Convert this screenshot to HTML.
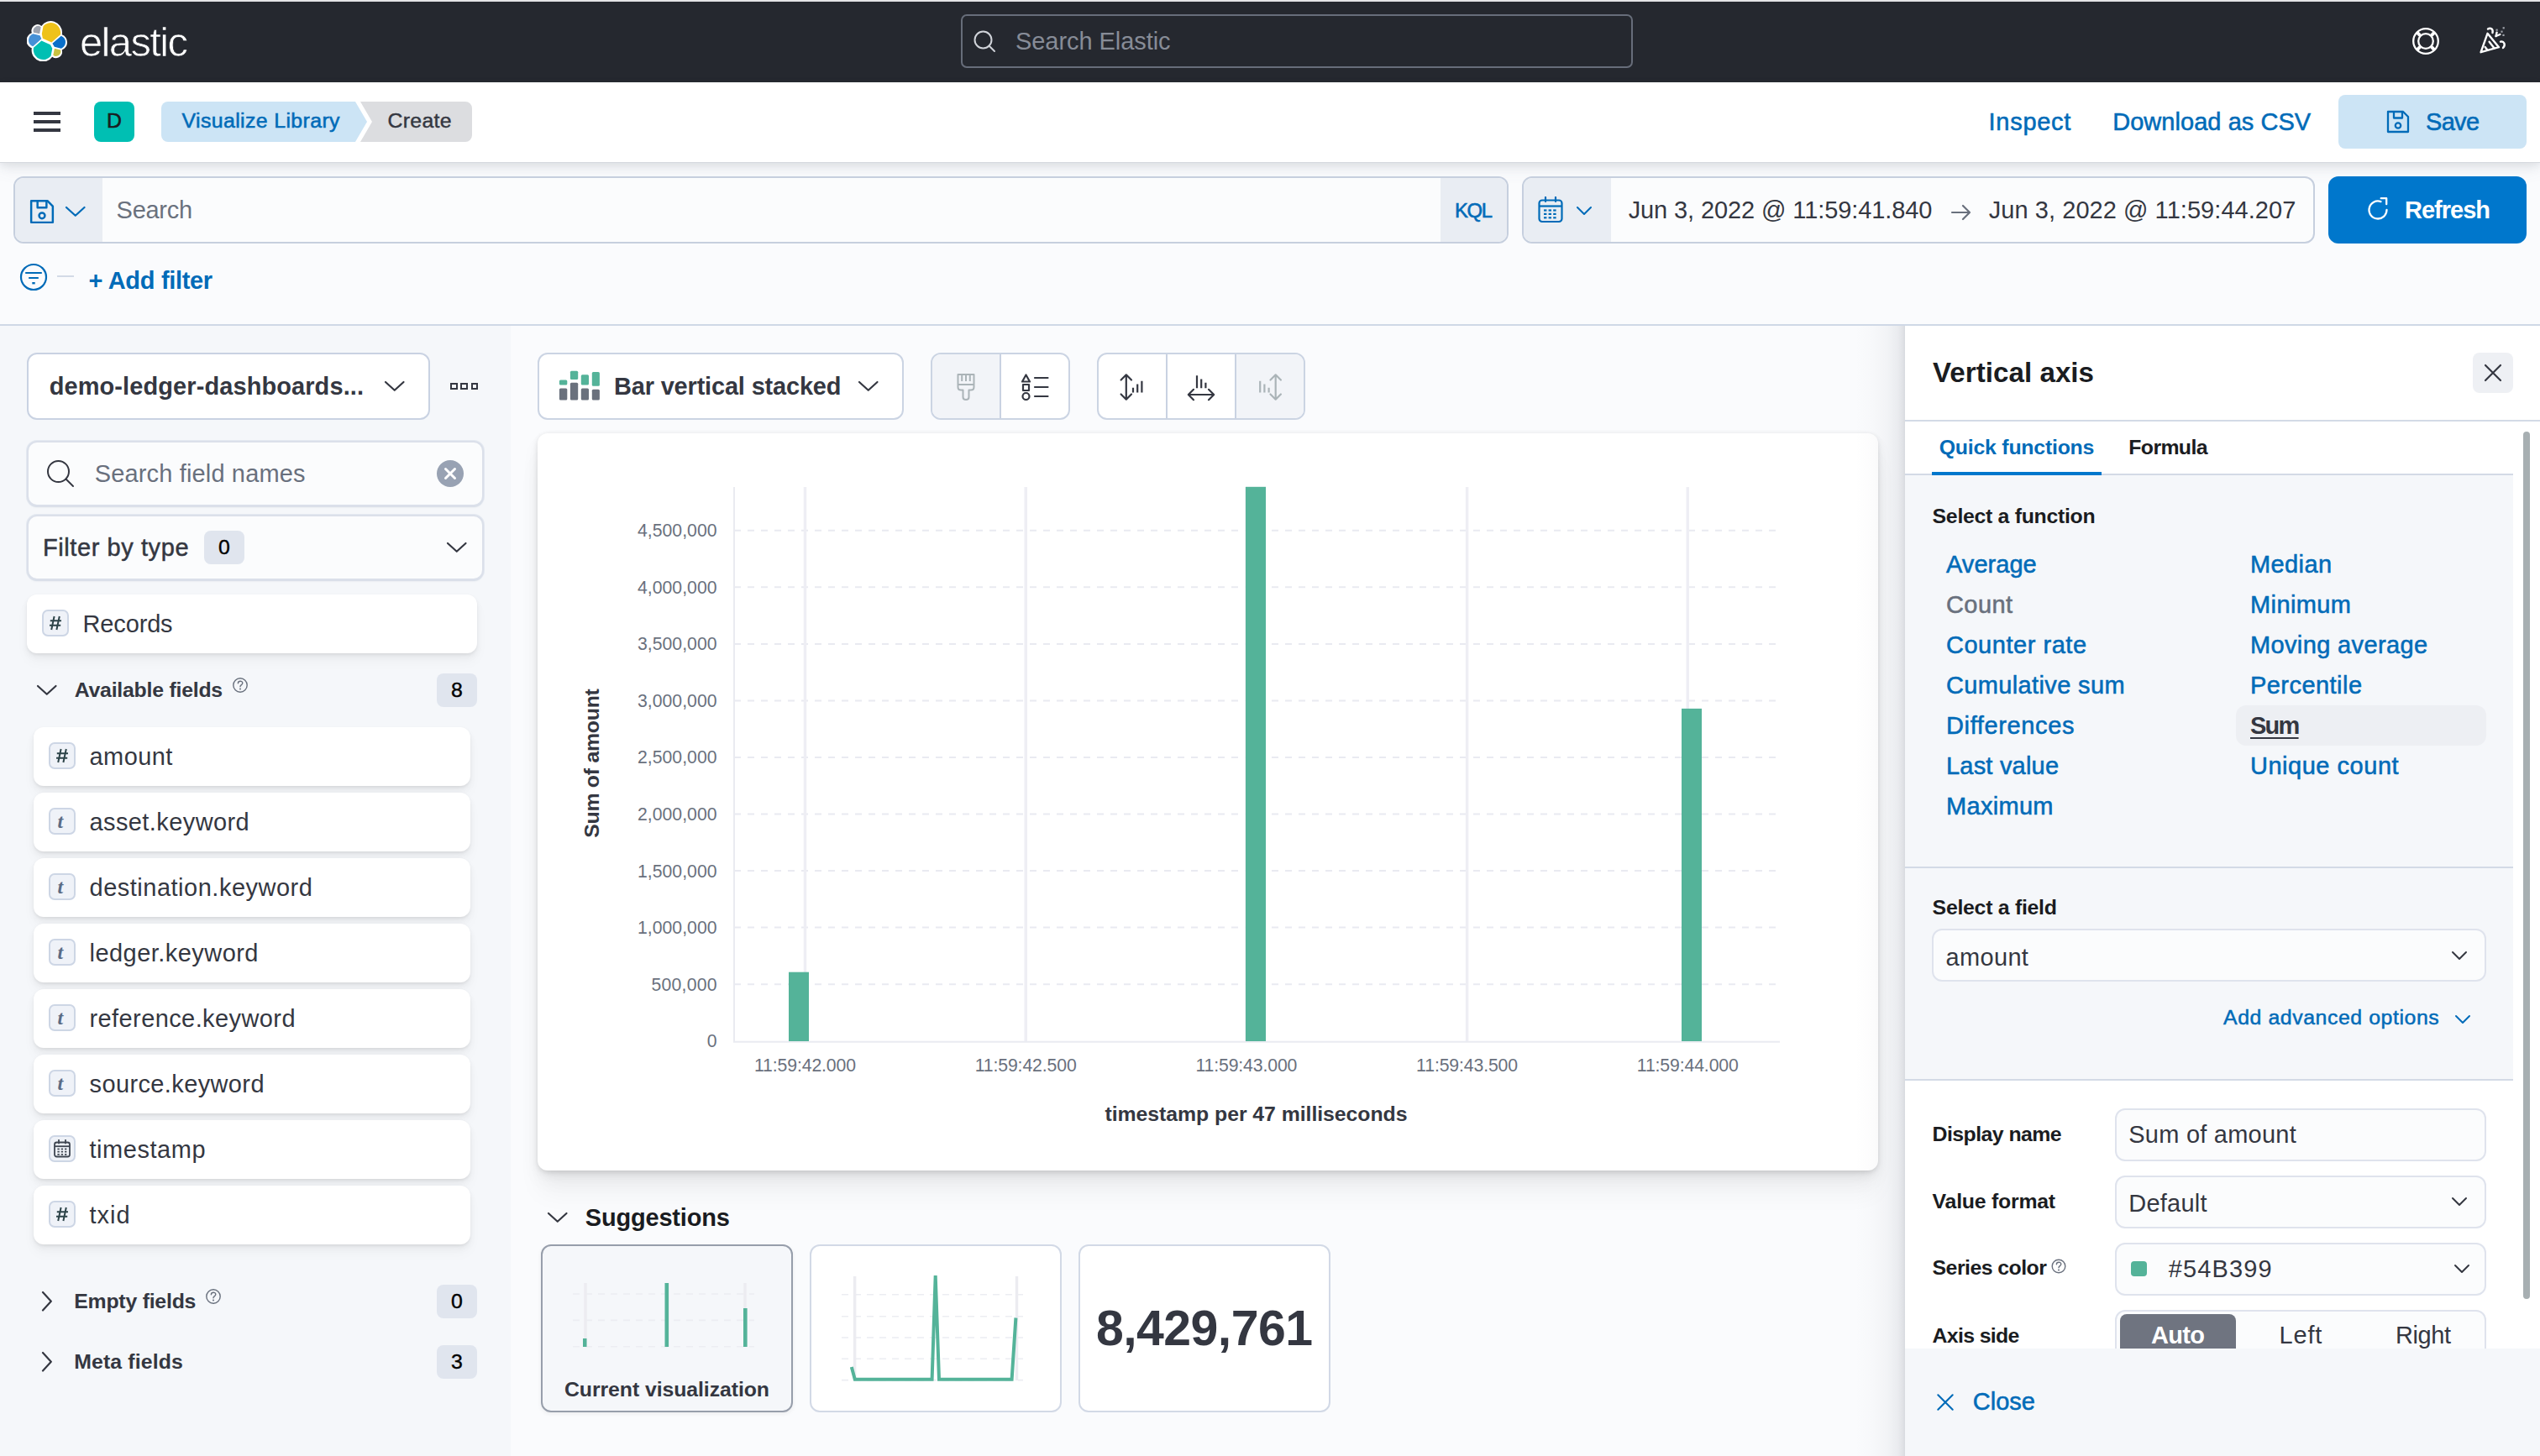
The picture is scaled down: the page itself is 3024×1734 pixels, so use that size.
<!DOCTYPE html>
<html lang="en"><head><meta charset="utf-8"><title>Lens - Elastic</title>
<style>
html,body{margin:0;padding:0;}
body{width:3024px;height:1734px;overflow:hidden;position:relative;background:#fafbfd;font-family:"Liberation Sans",sans-serif;}
.b{position:absolute;display:block;}
.t{position:absolute;white-space:nowrap;font-family:"Liberation Sans",sans-serif;}
</style></head>
<body>
<div class="b" style="left:0px;top:0px;width:3024px;height:2px;background:#e4e4e6;"></div>
<div class="b" style="left:0px;top:2px;width:3024px;height:96px;background:#25282f;"></div>
<div class="b" style="left:0px;top:193px;width:3024px;height:193px;background:#fafbfd;"></div>
<div class="b" style="left:0px;top:386px;width:3024px;height:2px;background:#cfd8e6;"></div>
<div class="b" style="left:0px;top:388px;width:608px;height:1346px;background:#f5f7fa;"></div>
<div class="b" style="left:608px;top:388px;width:1660px;height:1346px;background:#fafbfd;"></div>
<div class="b" style="left:0px;top:98px;width:3024px;height:95px;background:#fff;box-shadow:0 1px 0 #d6d9de, 0 4px 10px rgba(105,112,125,.16), 0 10px 18px rgba(105,112,125,.07);"></div>
<svg class="b" style="left:32px;top:25px;" width="48" height="48" viewBox="0 0 32 32"><g fill="none" fill-rule="evenodd">
<path fill="#FFF" d="M32 16.77a6.334 6.334 0 00-1.14-3.63 6.269 6.269 0 00-3.02-2.3 9.048 9.048 0 00.16-1.7 9.15 9.15 0 00-1.73-5.37A9.037 9.037 0 0021.7.44a8.963 8.963 0 00-5.62.12 9.01 9.01 0 00-4.5 3.38 4.9 4.9 0 00-6.03-.03 4.963 4.963 0 00-1.74 2.54c-.3 1.01-.27 2.1.09 3.09a6.347 6.347 0 00-3.03 2.31 6.406 6.406 0 00-.03 7.3c.75 1.08 1.82 1.9 3.05 2.35a9.18 9.18 0 00-.16 1.7c0 1.93.61 3.8 1.73 5.36a9.04 9.04 0 004.56 3.31c1.83.59 3.79.57 5.61-.03a9.037 9.037 0 004.51-3.36 4.867 4.867 0 003 1.04c1.04 0 2.05-.34 2.89-.95a4.94 4.94 0 001.77-2.48c.33-.99.33-2.06-.01-3.05a6.364 6.364 0 003.04-2.31A6.39 6.39 0 0032 16.77"/>
<path fill="#EEC21A" d="M12.58 13.79l7 3.2 7.07-6.2a7.849 7.849 0 00.15-1.57 7.87 7.87 0 00-1.39-4.47A7.834 7.834 0 0021.72 1.9a7.822 7.822 0 00-4.68-.27 7.862 7.862 0 00-4 2.45l-1.17 6.1.71 3.61z"/>
<path fill="#00BFB3" d="M5.33 21.22a7.94 7.94 0 001.23 6.06 7.86 7.86 0 003.71 2.87c1.51.58 3.17.67 4.74.27a7.85 7.85 0 004.02-2.51l1.17-6.07-1.56-2.98-7.03-3.21-6.28 5.57z"/>
<path fill="#9CA2AD" d="M5.29 9.09l4.8 1.13L11.14 4.77a3.785 3.785 0 00-4.53-.02A3.823 3.823 0 005.29 9.09"/>
<path fill="#4590D6" d="M4.87 10.23a5.354 5.354 0 00-2.54 1.93 5.32 5.32 0 00-.98 3.04c0 1.1.33 2.17.95 3.07a5.374 5.374 0 002.55 1.97l6.73-6.08-1.24-2.64-5.47-1.29z"/>
<path fill="#C9C341" d="M20.87 27.23a3.744 3.744 0 002.29.8 3.792 3.792 0 003.13-1.66 3.823 3.823 0 00.45-3.42l-4.8-1.12-1.07 5.4z"/>
<path fill="#0A6FC9" d="M21.85 20.55l5.28 1.23c1.03-.38 1.92-1.06 2.55-1.95a5.31 5.31 0 00.98-3.05 5.35 5.35 0 00-.94-3.04 5.373 5.373 0 00-2.52-1.96l-6.91 6.05 1.56 2.72z"/>
</g></svg>
<span id="logo" class="t" style="top:26.0px;font-size:49px;line-height:49px;font-weight:400;color:#fff;letter-spacing:-1.648px;left:95px;-webkit-text-stroke:0.7px #25282f;">elastic</span>
<div class="b" style="left:1144px;top:17px;width:800px;height:64px;border:2px solid #676d7a;border-radius:7px;box-sizing:border-box;"></div>
<svg class="b" style="left:1158px;top:35px;" width="28" height="28" viewBox="0 0 28 28"><circle cx="12.5" cy="12.5" r="10" fill="none" stroke="#d0d3d9" stroke-width="2"/><path d="M19.5 19.5 L26 26" stroke="#d0d3d9" stroke-width="2" stroke-linecap="round"/></svg>
<span id="t2" class="t" style="top:34.5px;font-size:28.98px;line-height:28.98px;font-weight:400;color:#878c97;letter-spacing:-0.044px;left:1209px;">Search Elastic</span>
<svg class="b" style="left:2870px;top:31px;" width="36" height="36" viewBox="-18 -18 36 36"><circle r="14.8" fill="none" stroke="#fff" stroke-width="2.3"/><circle r="8.8" fill="none" stroke="#fff" stroke-width="2.3"/><g stroke="#fff" stroke-width="4"><path d="M6.6 -6.6 L10.3 -10.3"/><path d="M-6.6 -6.6 L-10.3 -10.3"/><path d="M6.6 6.6 L10.3 10.3"/><path d="M-6.6 6.6 L-10.3 10.3"/></g></svg>
<svg class="b" style="left:2950px;top:31px;" width="36" height="36" viewBox="0 0 36 36"><g fill="none" stroke="#fff" stroke-width="2.4" stroke-linecap="round" stroke-linejoin="round"><path d="M11.5 8.8 L25 25.2 L3.6 31.2 Z"/><path d="M13.6 18.8 L19.6 26.4"/><path d="M8.6 25 L11.4 28.6"/><path d="M12 3.5 C15 1.5 18.5 3.5 17.5 8"/><path d="M21.6 12 L26.4 10"/><path d="M21.6 12 L22.6 7.6"/><path d="M27 18.6 C31 17.6 33.6 22 30 26"/></g><g fill="#9ea2aa"><rect x="21.5" y="3.6" width="2.2" height="2.2"/><rect x="27.4" y="5.6" width="2.2" height="2.2"/><rect x="29.6" y="1.2" width="2.2" height="2.2"/><rect x="29.4" y="9.8" width="2.2" height="2.2"/></g></svg>
<div class="b" style="left:40px;top:133px;width:32px;height:4px;background:#343741;"></div>
<div class="b" style="left:40px;top:143px;width:32px;height:4px;background:#343741;"></div>
<div class="b" style="left:40px;top:153px;width:32px;height:4px;background:#343741;"></div>
<div class="b" style="left:112px;top:121px;width:48px;height:48px;background:#00bfb3;border-radius:8px;"></div>
<span id="t3" class="t" style="top:132.0px;font-size:24.84px;line-height:24.84px;font-weight:400;color:#1a1c21;-webkit-text-stroke:0.6px #1a1c21;left:136px;transform:translateX(-50%);margin-left:0.00px;">D</span>
<svg class="b" style="left:192px;top:121px;" width="372" height="48" viewBox="0 0 372 48"><path d="M8 0 H231 L245 24 L231 48 H8 A8 8 0 0 1 0 40 V8 A8 8 0 0 1 8 0 Z" fill="#cce4f5"/><path d="M237 0 H362 A8 8 0 0 1 370 8 V40 A8 8 0 0 1 362 48 H237 L251 24 Z" fill="#dcdde0"/></svg>
<span id="t4" class="t" style="top:132.0px;font-size:24.84px;line-height:24.84px;font-weight:400;color:#006bb8;letter-spacing:0.394px;-webkit-text-stroke:0.55px #006bb8;left:216.5px;">Visualize Library</span>
<span id="t5" class="t" style="top:132.2px;font-size:24.84px;line-height:24.84px;font-weight:400;color:#343741;letter-spacing:0.294px;-webkit-text-stroke:0.45px #343741;left:461.5px;">Create</span>
<span id="t6" class="t" style="top:130.5px;font-size:28.98px;line-height:28.98px;font-weight:400;color:#006bb8;letter-spacing:0.732px;-webkit-text-stroke:0.55px #006bb8;left:2367.6px;">Inspect</span>
<span id="t7" class="t" style="top:130.5px;font-size:28.98px;line-height:28.98px;font-weight:400;color:#006bb8;letter-spacing:0.065px;-webkit-text-stroke:0.55px #006bb8;left:2515.2px;">Download as CSV</span>
<div class="b" style="left:2784px;top:113px;width:224px;height:64px;background:#cce4f5;border-radius:8px;"></div>
<svg class="b" style="left:2841px;top:131px;" width="28" height="28" viewBox="0 0 28 28"><path d="M2 2 H20 L26 8 V26 H2 Z" fill="none" stroke="#006bb8" stroke-width="2.3" stroke-linejoin="round"/><path d="M9 2 V9.5 H19 V2" fill="none" stroke="#006bb8" stroke-width="2.3" stroke-linejoin="round"/><circle cx="14" cy="18.5" r="3.2" fill="none" stroke="#006bb8" stroke-width="2.3"/></svg>
<span id="t8" class="t" style="top:130.5px;font-size:28.98px;line-height:28.98px;font-weight:400;color:#006bb8;letter-spacing:-0.677px;-webkit-text-stroke:0.55px #006bb8;left:2888px;">Save</span>
<div class="b" style="left:16px;top:210px;width:1780px;height:80px;background:#fbfcfd;border:2px solid #c6cfde;border-radius:12px;overflow:hidden;box-sizing:border-box;"><div class="b" style="left:0;top:0;width:104px;height:76px;background:#e9edf3;"></div><div class="b" style="right:0;top:0;width:79px;height:76px;background:#e9edf3;"></div></div>
<svg class="b" style="left:35px;top:237px;" width="30" height="30" viewBox="0 0 28 28"><path d="M2 2 H20 L26 8 V26 H2 Z" fill="none" stroke="#006bb8" stroke-width="2.3" stroke-linejoin="round"/><path d="M9 2 V9.5 H19 V2" fill="none" stroke="#006bb8" stroke-width="2.3" stroke-linejoin="round"/><circle cx="14" cy="18.5" r="3.2" fill="none" stroke="#006bb8" stroke-width="2.3"/></svg>
<svg class="b" style="left:77.25px;top:245.1px;" width="25.5" height="13.8" viewBox="-2 -2 25.5 13.8"><path d="M0 0 L10.75 9.8 L21.5 0" fill="none" stroke="#006bb8" stroke-width="2.2" stroke-linecap="round" stroke-linejoin="round"/></svg>
<span id="t9" class="t" style="top:235.5px;font-size:28.98px;line-height:28.98px;font-weight:400;color:#6a717d;letter-spacing:-0.259px;left:138.6px;">Search</span>
<span id="t10" class="t" style="top:238.9px;font-size:23.8px;line-height:23.8px;font-weight:400;color:#006bb8;letter-spacing:-1.312px;-webkit-text-stroke:0.6px #006bb8;left:1732px;">KQL</span>
<div class="b" style="left:1812px;top:210px;width:944px;height:80px;background:#fbfcfd;border:2px solid #c6cfde;border-radius:12px;overflow:hidden;box-sizing:border-box;"><div class="b" style="left:0;top:0;width:104px;height:76px;background:#e9edf3;"></div></div>
<svg class="b" style="left:1831px;top:234px;" width="30" height="32" viewBox="0 0 30 32"><g fill="none" stroke="#006bb8" stroke-width="2.2" stroke-linejoin="round"><rect x="1.5" y="4.5" width="27" height="25.5" rx="3.5"/><path d="M1.5 11.5 H28.5"/><path d="M9 1 V6" stroke-linecap="round"/><path d="M21 1 V6" stroke-linecap="round"/></g><g fill="#006bb8"><rect x="7.0" y="15.4" width="3.4" height="2.2"/><rect x="12.6" y="15.4" width="3.4" height="2.2"/><rect x="18.2" y="15.4" width="3.4" height="2.2"/><rect x="7.0" y="19.8" width="3.4" height="2.2"/><rect x="12.6" y="19.8" width="3.4" height="2.2"/><rect x="18.2" y="19.8" width="3.4" height="2.2"/><rect x="7.0" y="24.2" width="3.4" height="2.2"/><rect x="12.6" y="24.2" width="3.4" height="2.2"/><rect x="18.2" y="24.2" width="3.4" height="2.2"/></g></svg>
<svg class="b" style="left:1876.0px;top:244.5px;" width="20" height="12" viewBox="-2 -2 20 12"><path d="M0 0 L8.0 8 L16 0" fill="none" stroke="#006bb8" stroke-width="2.0" stroke-linecap="round" stroke-linejoin="round"/></svg>
<span id="t11" class="t" style="top:235.5px;font-size:28.98px;line-height:28.98px;font-weight:400;color:#343741;letter-spacing:-0.088px;left:1938.7px;">Jun 3, 2022 @ 11:59:41.840</span>
<svg class="b" style="left:2322px;top:240.5px;" width="26" height="24" viewBox="0 0 26 24"><path d="M2 12 H23 M15 4 L23 12 L15 20" fill="none" stroke="#69707d" stroke-width="2.2" stroke-linecap="round" stroke-linejoin="round"/></svg>
<span id="t12" class="t" style="top:235.5px;font-size:28.98px;line-height:28.98px;font-weight:400;color:#343741;letter-spacing:0.064px;left:2367.8px;">Jun 3, 2022 @ 11:59:44.207</span>
<div class="b" style="left:2772px;top:210px;width:236px;height:80px;background:#0077cc;border-radius:12px;"></div>
<svg class="b" style="left:2816px;top:235px;" width="30" height="30" viewBox="0 0 30 30"><path d="M25.5 15 A10.5 10.5 0 1 1 18.5 5.1" fill="none" stroke="#fff" stroke-width="2.3" stroke-linecap="round"/><path d="M17.5 1.5 H24 V8.5" fill="none" stroke="#fff" stroke-width="2.3" stroke-linecap="round" stroke-linejoin="round" transform="translate(1.2 -0.3)"/></svg>
<span id="t13" class="t" style="top:235.5px;font-size:28.98px;line-height:28.98px;font-weight:700;color:#fff;letter-spacing:-0.979px;left:2863px;">Refresh</span>
<svg class="b" style="left:22px;top:312px;" width="36" height="36" viewBox="0 0 36 36"><circle cx="18" cy="18" r="15" fill="none" stroke="#006bb8" stroke-width="2.2"/><path d="M9 13 H27 M13 19 H23" stroke="#006bb8" stroke-width="2.2" stroke-linecap="round"/><rect x="16.3" y="24" width="3.4" height="2.4" fill="#006bb8"/></svg>
<div class="b" style="left:68px;top:328px;width:20px;height:2px;background:#d3dae6;"></div>
<span id="t14" class="t" style="top:319.5px;font-size:28.98px;line-height:28.98px;font-weight:700;color:#006bb8;letter-spacing:-0.312px;left:105.5px;">+ Add filter</span>
<div class="b" style="left:32px;top:420px;width:480px;height:80px;background:#fff;border:2px solid #c9d2e2;border-radius:12px;box-sizing:border-box;"></div>
<span id="t15" class="t" style="top:446.0px;font-size:28.98px;line-height:28.98px;font-weight:700;color:#343741;letter-spacing:0.103px;left:58.7px;">demo-ledger-dashboards...</span>
<svg class="b" style="left:457.25px;top:453.1px;" width="25.5" height="13.8" viewBox="-2 -2 25.5 13.8"><path d="M0 0 L10.75 9.8 L21.5 0" fill="none" stroke="#343741" stroke-width="2.2" stroke-linecap="round" stroke-linejoin="round"/></svg>
<div class="b" style="left:536.0px;top:455.5px;width:8.5px;height:8.5px;border:2px solid #343741;box-sizing:border-box;"></div>
<div class="b" style="left:548.4px;top:455.5px;width:8.5px;height:8.5px;border:2px solid #343741;box-sizing:border-box;"></div>
<div class="b" style="left:560.8px;top:455.5px;width:8.5px;height:8.5px;border:2px solid #343741;box-sizing:border-box;"></div>
<div class="b" style="left:32px;top:525px;width:544px;height:78px;background:#fbfcfd;border:2px solid #dbe0ea;border-radius:12px;box-sizing:border-box;box-shadow:0 0 0 1px rgba(203,212,227,.4),0 2px 2px -1px rgba(152,162,179,.25);"></div>
<svg class="b" style="left:55px;top:547px;" width="34" height="34" viewBox="0 0 34 34"><circle cx="14.5" cy="14.5" r="12.5" fill="none" stroke="#343741" stroke-width="2"/><path d="M23.5 23.5 L32 32" stroke="#343741" stroke-width="2" stroke-linecap="round"/></svg>
<span id="t16" class="t" style="top:549.5px;font-size:28.98px;line-height:28.98px;font-weight:400;color:#69707d;letter-spacing:0.166px;left:112.7px;">Search field names</span>
<svg class="b" style="left:520px;top:548px;" width="32" height="32" viewBox="0 0 32 32"><circle cx="16" cy="16" r="16" fill="#98a2b3"/><path d="M10.5 10.5 L21.5 21.5 M21.5 10.5 L10.5 21.5" stroke="#fff" stroke-width="3" stroke-linecap="round"/></svg>
<div class="b" style="left:32px;top:613px;width:544px;height:78px;background:#fbfcfd;border:2px solid #dbe0ea;border-radius:12px;box-sizing:border-box;box-shadow:0 0 0 1px rgba(203,212,227,.4),0 2px 2px -1px rgba(152,162,179,.25);"></div>
<span id="t17" class="t" style="top:637.5px;font-size:28.98px;line-height:28.98px;font-weight:400;color:#343741;letter-spacing:0.590px;-webkit-text-stroke:0.5px #343741;left:51px;">Filter by type</span>
<div class="b" style="left:243px;top:632px;width:48px;height:40px;background:#e0e5ee;border-radius:8px;"></div>
<span id="t18" class="t" style="top:639.5px;font-size:24.84px;line-height:24.84px;font-weight:400;color:#000;-webkit-text-stroke:0.4px #000;left:267px;transform:translateX(-50%);margin-left:0.00px;">0</span>
<svg class="b" style="left:531.25px;top:645.1px;" width="25.5" height="13.8" viewBox="-2 -2 25.5 13.8"><path d="M0 0 L10.75 9.8 L21.5 0" fill="none" stroke="#343741" stroke-width="2.2" stroke-linecap="round" stroke-linejoin="round"/></svg>
<div class="b" style="left:32px;top:708px;width:536px;height:70px;background:#fff;border-radius:12px;box-shadow:0 1.6px 3px rgba(0,0,0,.05),0 4px 8px rgba(0,0,0,.05),0 10px 16px rgba(0,0,0,.03);"></div>
<div class="b" style="left:50px;top:726px;width:32px;height:32px;background:#eff2f8;border:2px solid #cdd6e5;border-radius:7px;box-sizing:border-box;"></div>
<svg class="b" style="left:58px;top:733px;" width="16" height="18" viewBox="0 0 16 18"><path d="M6.6 1 L3.2 17 M12.8 1 L9.4 17 M1.8 6.2 H15 M1 11.8 H14.2" fill="none" stroke="#2d4449" stroke-width="2"/></svg>
<span id="t19" class="t" style="top:729.0px;font-size:28.98px;line-height:28.98px;font-weight:400;color:#343741;letter-spacing:-0.146px;left:98.6px;">Records</span>
<svg class="b" style="left:43.25px;top:815.1px;" width="25.5" height="13.8" viewBox="-2 -2 25.5 13.8"><path d="M0 0 L10.75 9.8 L21.5 0" fill="none" stroke="#343741" stroke-width="2.2" stroke-linecap="round" stroke-linejoin="round"/></svg>
<span id="t20" class="t" style="top:809.5px;font-size:24.84px;line-height:24.84px;font-weight:700;color:#343741;letter-spacing:-0.224px;left:88.7px;">Available fields</span>
<svg class="b" style="left:276px;top:806px;" width="20" height="20" viewBox="-10 -10 20 20"><circle r="8.2" fill="none" stroke="#69707d" stroke-width="1.4"/><path d="M-2.6 -2.2 C-2.6 -5.6 2.8 -5.6 2.8 -2.4 C2.8 -0.4 0 -0.4 0 1.8" fill="none" stroke="#69707d" stroke-width="1.4" stroke-linecap="round"/><circle cx="0" cy="4.4" r="1" fill="#69707d"/></svg>
<div class="b" style="left:520px;top:802px;width:48px;height:40px;background:#e0e5ee;border-radius:8px;"></div>
<span id="t21" class="t" style="top:809.5px;font-size:24.84px;line-height:24.84px;font-weight:400;color:#000;-webkit-text-stroke:0.4px #000;left:544px;transform:translateX(-50%);margin-left:0.00px;">8</span>
<div class="b" style="left:40px;top:866px;width:520px;height:70px;background:#fff;border-radius:12px;box-shadow:0 1.6px 3px rgba(0,0,0,.05),0 4px 8px rgba(0,0,0,.05),0 10px 16px rgba(0,0,0,.03);"></div>
<div class="b" style="left:58px;top:884px;width:32px;height:32px;background:#eff2f8;border:2px solid #cdd6e5;border-radius:7px;box-sizing:border-box;"></div>
<svg class="b" style="left:66px;top:891px;" width="16" height="18" viewBox="0 0 16 18"><path d="M6.6 1 L3.2 17 M12.8 1 L9.4 17 M1.8 6.2 H15 M1 11.8 H14.2" fill="none" stroke="#2d4449" stroke-width="2"/></svg>
<span id="t22" class="t" style="top:886.9px;font-size:28.98px;line-height:28.98px;font-weight:400;color:#343741;letter-spacing:0.455px;left:106.5px;">amount</span>
<div class="b" style="left:40px;top:944px;width:520px;height:70px;background:#fff;border-radius:12px;box-shadow:0 1.6px 3px rgba(0,0,0,.05),0 4px 8px rgba(0,0,0,.05),0 10px 16px rgba(0,0,0,.03);"></div>
<div class="b" style="left:58px;top:962px;width:32px;height:32px;background:#eff2f8;border:2px solid #cdd6e5;border-radius:7px;box-sizing:border-box;"></div>
<span class="t" style="left:68.5px;top:967px;font-size:24px;line-height:22px;font-family:'Liberation Serif',serif;font-style:italic;font-weight:700;color:#5a6b85;">t</span>
<span id="t23" class="t" style="top:964.9px;font-size:28.98px;line-height:28.98px;font-weight:400;color:#343741;letter-spacing:0.419px;left:106.5px;">asset.keyword</span>
<div class="b" style="left:40px;top:1022px;width:520px;height:70px;background:#fff;border-radius:12px;box-shadow:0 1.6px 3px rgba(0,0,0,.05),0 4px 8px rgba(0,0,0,.05),0 10px 16px rgba(0,0,0,.03);"></div>
<div class="b" style="left:58px;top:1040px;width:32px;height:32px;background:#eff2f8;border:2px solid #cdd6e5;border-radius:7px;box-sizing:border-box;"></div>
<span class="t" style="left:68.5px;top:1045px;font-size:24px;line-height:22px;font-family:'Liberation Serif',serif;font-style:italic;font-weight:700;color:#5a6b85;">t</span>
<span id="t24" class="t" style="top:1042.9px;font-size:28.98px;line-height:28.98px;font-weight:400;color:#343741;letter-spacing:0.520px;left:106.5px;">destination.keyword</span>
<div class="b" style="left:40px;top:1100px;width:520px;height:70px;background:#fff;border-radius:12px;box-shadow:0 1.6px 3px rgba(0,0,0,.05),0 4px 8px rgba(0,0,0,.05),0 10px 16px rgba(0,0,0,.03);"></div>
<div class="b" style="left:58px;top:1118px;width:32px;height:32px;background:#eff2f8;border:2px solid #cdd6e5;border-radius:7px;box-sizing:border-box;"></div>
<span class="t" style="left:68.5px;top:1123px;font-size:24px;line-height:22px;font-family:'Liberation Serif',serif;font-style:italic;font-weight:700;color:#5a6b85;">t</span>
<span id="t25" class="t" style="top:1120.9px;font-size:28.98px;line-height:28.98px;font-weight:400;color:#343741;letter-spacing:0.472px;left:106.5px;">ledger.keyword</span>
<div class="b" style="left:40px;top:1178px;width:520px;height:70px;background:#fff;border-radius:12px;box-shadow:0 1.6px 3px rgba(0,0,0,.05),0 4px 8px rgba(0,0,0,.05),0 10px 16px rgba(0,0,0,.03);"></div>
<div class="b" style="left:58px;top:1196px;width:32px;height:32px;background:#eff2f8;border:2px solid #cdd6e5;border-radius:7px;box-sizing:border-box;"></div>
<span class="t" style="left:68.5px;top:1201px;font-size:24px;line-height:22px;font-family:'Liberation Serif',serif;font-style:italic;font-weight:700;color:#5a6b85;">t</span>
<span id="t26" class="t" style="top:1198.9px;font-size:28.98px;line-height:28.98px;font-weight:400;color:#343741;letter-spacing:0.418px;left:106.5px;">reference.keyword</span>
<div class="b" style="left:40px;top:1256px;width:520px;height:70px;background:#fff;border-radius:12px;box-shadow:0 1.6px 3px rgba(0,0,0,.05),0 4px 8px rgba(0,0,0,.05),0 10px 16px rgba(0,0,0,.03);"></div>
<div class="b" style="left:58px;top:1274px;width:32px;height:32px;background:#eff2f8;border:2px solid #cdd6e5;border-radius:7px;box-sizing:border-box;"></div>
<span class="t" style="left:68.5px;top:1279px;font-size:24px;line-height:22px;font-family:'Liberation Serif',serif;font-style:italic;font-weight:700;color:#5a6b85;">t</span>
<span id="t27" class="t" style="top:1276.9px;font-size:28.98px;line-height:28.98px;font-weight:400;color:#343741;letter-spacing:0.394px;left:106.5px;">source.keyword</span>
<div class="b" style="left:40px;top:1334px;width:520px;height:70px;background:#fff;border-radius:12px;box-shadow:0 1.6px 3px rgba(0,0,0,.05),0 4px 8px rgba(0,0,0,.05),0 10px 16px rgba(0,0,0,.03);"></div>
<div class="b" style="left:58px;top:1352px;width:32px;height:32px;background:#eff2f8;border:2px solid #cdd6e5;border-radius:7px;box-sizing:border-box;"></div>
<svg class="b" style="left:64px;top:1357px;" width="20" height="22" viewBox="0 0 20 22"><g fill="none" stroke="#3f4651" stroke-width="1.8"><rect x="1" y="3.5" width="18" height="17" rx="2.5"/><path d="M1 8.2 H19"/><path d="M6 0.8 V4.5 M14 0.8 V4.5" stroke-linecap="round"/></g><g fill="#3f4651"><rect x="4.4" y="10.6" width="2.4" height="1.7"/><rect x="8.7" y="10.6" width="2.4" height="1.7"/><rect x="13.0" y="10.6" width="2.4" height="1.7"/><rect x="4.4" y="13.8" width="2.4" height="1.7"/><rect x="8.7" y="13.8" width="2.4" height="1.7"/><rect x="13.0" y="13.8" width="2.4" height="1.7"/><rect x="4.4" y="17.0" width="2.4" height="1.7"/><rect x="8.7" y="17.0" width="2.4" height="1.7"/><rect x="13.0" y="17.0" width="2.4" height="1.7"/></g></svg>
<span id="t28" class="t" style="top:1354.9px;font-size:28.98px;line-height:28.98px;font-weight:400;color:#343741;letter-spacing:0.547px;left:106.5px;">timestamp</span>
<div class="b" style="left:40px;top:1412px;width:520px;height:70px;background:#fff;border-radius:12px;box-shadow:0 1.6px 3px rgba(0,0,0,.05),0 4px 8px rgba(0,0,0,.05),0 10px 16px rgba(0,0,0,.03);"></div>
<div class="b" style="left:58px;top:1430px;width:32px;height:32px;background:#eff2f8;border:2px solid #cdd6e5;border-radius:7px;box-sizing:border-box;"></div>
<svg class="b" style="left:66px;top:1437px;" width="16" height="18" viewBox="0 0 16 18"><path d="M6.6 1 L3.2 17 M12.8 1 L9.4 17 M1.8 6.2 H15 M1 11.8 H14.2" fill="none" stroke="#2d4449" stroke-width="2"/></svg>
<span id="t29" class="t" style="top:1432.9px;font-size:28.98px;line-height:28.98px;font-weight:400;color:#343741;letter-spacing:0.969px;left:106.5px;">txid</span>
<svg class="b" style="left:49.1px;top:1536.75px;" width="13.8" height="25.5" viewBox="-2 -2 13.8 25.5"><path d="M0 0 L9.8 10.75 L0 21.5" fill="none" stroke="#343741" stroke-width="2.2" stroke-linecap="round" stroke-linejoin="round"/></svg>
<span id="t30" class="t" style="top:1537.8px;font-size:24.84px;line-height:24.84px;font-weight:700;color:#343741;letter-spacing:-0.220px;left:88.2px;">Empty fields</span>
<svg class="b" style="left:244px;top:1534px;" width="20" height="20" viewBox="-10 -10 20 20"><circle r="8.2" fill="none" stroke="#69707d" stroke-width="1.4"/><path d="M-2.6 -2.2 C-2.6 -5.6 2.8 -5.6 2.8 -2.4 C2.8 -0.4 0 -0.4 0 1.8" fill="none" stroke="#69707d" stroke-width="1.4" stroke-linecap="round"/><circle cx="0" cy="4.4" r="1" fill="#69707d"/></svg>
<div class="b" style="left:520px;top:1530px;width:48px;height:40px;background:#e0e5ee;border-radius:8px;"></div>
<span id="t31" class="t" style="top:1537.5px;font-size:24.84px;line-height:24.84px;font-weight:400;color:#000;-webkit-text-stroke:0.4px #000;left:544px;transform:translateX(-50%);margin-left:0.00px;">0</span>
<svg class="b" style="left:49.1px;top:1608.75px;" width="13.8" height="25.5" viewBox="-2 -2 13.8 25.5"><path d="M0 0 L9.8 10.75 L0 21.5" fill="none" stroke="#343741" stroke-width="2.2" stroke-linecap="round" stroke-linejoin="round"/></svg>
<span id="t32" class="t" style="top:1609.8px;font-size:24.84px;line-height:24.84px;font-weight:700;color:#343741;letter-spacing:0.139px;left:88.2px;">Meta fields</span>
<div class="b" style="left:520px;top:1602px;width:48px;height:40px;background:#e0e5ee;border-radius:8px;"></div>
<span id="t33" class="t" style="top:1609.5px;font-size:24.84px;line-height:24.84px;font-weight:400;color:#000;-webkit-text-stroke:0.4px #000;left:544px;transform:translateX(-50%);margin-left:0.00px;">3</span>
<div class="b" style="left:640px;top:420px;width:436px;height:80px;background:#fff;border:2px solid #cbd4e3;border-radius:12px;box-sizing:border-box;"></div>
<svg class="b" style="left:660px;top:436px;" width="60" height="46" viewBox="660 436 60 46"><rect x="665.9" y="452.6" width="9.4" height="5.9" rx="1.5" fill="#54b399"/><rect x="665.9" y="462.5" width="9.4" height="14.0" rx="1.5" fill="#6a717d"/><rect x="678.9" y="441.7" width="9.3" height="10.3" rx="1.5" fill="#54b399"/><rect x="678.9" y="455.8" width="9.3" height="20.7" rx="1.5" fill="#6a717d"/><rect x="691.8" y="446.2" width="9.2" height="12.3" rx="1.5" fill="#54b399"/><rect x="691.8" y="462.5" width="9.2" height="14.0" rx="1.5" fill="#6a717d"/><rect x="704.8" y="443" width="9.1" height="16.8" rx="1.5" fill="#54b399"/><rect x="704.8" y="463.8" width="9.1" height="12.7" rx="1.5" fill="#6a717d"/></svg>
<span id="t34" class="t" style="top:445.5px;font-size:28.98px;line-height:28.98px;font-weight:700;color:#343741;letter-spacing:-0.172px;left:731px;">Bar vertical stacked</span>
<svg class="b" style="left:1021.25px;top:452.90000000000003px;" width="25.5" height="13.8" viewBox="-2 -2 25.5 13.8"><path d="M0 0 L10.75 9.8 L21.5 0" fill="none" stroke="#343741" stroke-width="2.2" stroke-linecap="round" stroke-linejoin="round"/></svg>
<div class="b" style="left:1108px;top:420px;width:166px;height:80px;background:#fff;border:2px solid #cbd4e3;border-radius:12px;box-sizing:border-box;overflow:hidden;"><div class="b" style="left:0;top:0;width:81px;height:76px;background:#f2f4f8;"></div><div class="b" style="left:80px;top:0;width:2px;height:76px;background:#c9d2e2;"></div></div>
<svg class="b" style="left:1134px;top:445px;" width="32" height="32" viewBox="0 0 32 32"><g fill="none" stroke="#abb4b8" stroke-width="2" stroke-linejoin="round"><path d="M6.5 1 H25.5 V16 Q25.5 19.5 22 19.5 H19.5 V28 Q19.5 31 16 31 Q12.5 31 12.5 28 V19.5 H10 Q6.5 19.5 6.5 16 Z"/><path d="M6.5 13 H25.5"/><path d="M11.2 1 V9 M16 1 V9 M20.8 1 V9"/></g></svg>
<svg class="b" style="left:1216px;top:445px;" width="33" height="32" viewBox="0 0 33 32"><g fill="none" stroke="#343741" stroke-width="2.2" stroke-linejoin="round"><path d="M5.5 1.5 L10 9.5 H1 Z"/><rect x="2" y="13" width="7" height="7"/><circle cx="5.5" cy="27" r="4"/><path d="M16 5 H31.5 M16 16 H31.5 M16 27 H31.5" stroke-linecap="round"/></g></svg>
<div class="b" style="left:1306px;top:420px;width:248px;height:80px;background:#fff;border:2px solid #cbd4e3;border-radius:12px;box-sizing:border-box;overflow:hidden;"><div class="b" style="left:80px;top:0;width:2px;height:76px;background:#c9d2e2;"></div><div class="b" style="left:162px;top:0;width:2px;height:76px;background:#c9d2e2;"></div><div class="b" style="left:164px;top:0;width:84px;height:76px;background:#f2f4f8;"></div></div>
<svg class="b" style="left:1332px;top:443px;" width="32" height="36" viewBox="1332 443 32 36"><g fill="none" stroke="#343741" stroke-width="2.2" stroke-linecap="round" stroke-linejoin="round"><path d="M1340.8 446.5 V475.5 M1334.6 452.5 L1340.8 446.3 L1347 452.5 M1334.6 469.5 L1340.8 475.7 L1347 469.5"/><path d="M1349 461.8 V467.5 M1354.2 457.6 V467.5 M1359.4 453.8 V467.5" stroke-linecap="butt"/></g></svg>
<svg class="b" style="left:1410px;top:443px;" width="40" height="36" viewBox="1410 443 40 36"><g fill="none" stroke="#343741" stroke-width="2.2" stroke-linecap="round" stroke-linejoin="round"><path d="M1415 470 H1445 M1421 463.8 L1414.8 470 L1421 476.2 M1439 463.8 L1445.2 470 L1439 476.2"/><path d="M1425 447.2 V462.3 M1430.2 451.5 V462.3 M1435.4 455.8 V462.3" stroke-linecap="butt"/></g></svg>
<svg class="b" style="left:1494px;top:443px;" width="34" height="36" viewBox="1494 443 34 36"><g fill="none" stroke="#abb4b8" stroke-width="2.2" stroke-linecap="round" stroke-linejoin="round"><path d="M1518.7 446.5 V475.5 M1512.5 452.5 L1518.7 446.3 L1524.9 452.5 M1512.5 469.5 L1518.7 475.7 L1524.9 469.5"/><path d="M1500.2 453.8 V467.5 M1505.4 457.6 V467.5 M1510.6 461.8 V467.5" stroke-linecap="butt"/></g></svg>
<div class="b" style="left:640px;top:516px;width:1596px;height:878px;background:#fff;border-radius:12px;box-shadow:0 1.8px 6px -1px rgba(0,0,0,.13),0 5.2px 14px -2px rgba(0,0,0,.07),0 11.4px 24px -2px rgba(0,0,0,.05),0 30px 30px -2px rgba(0,0,0,.04);"></div>
<svg class="b" style="left:640px;top:516px;" width="1596" height="877" viewBox="640 516 1596 877"><path d="M874 1172.2 H2115" stroke="#e9eaf1" stroke-width="2" stroke-dasharray="8 8" fill="none"/><path d="M874 1104.6 H2115" stroke="#e9eaf1" stroke-width="2" stroke-dasharray="8 8" fill="none"/><path d="M874 1037.1 H2115" stroke="#e9eaf1" stroke-width="2" stroke-dasharray="8 8" fill="none"/><path d="M874 969.5 H2115" stroke="#e9eaf1" stroke-width="2" stroke-dasharray="8 8" fill="none"/><path d="M874 902.0 H2115" stroke="#e9eaf1" stroke-width="2" stroke-dasharray="8 8" fill="none"/><path d="M874 834.4 H2115" stroke="#e9eaf1" stroke-width="2" stroke-dasharray="8 8" fill="none"/><path d="M874 766.9 H2115" stroke="#e9eaf1" stroke-width="2" stroke-dasharray="8 8" fill="none"/><path d="M874 699.3 H2115" stroke="#e9eaf1" stroke-width="2" stroke-dasharray="8 8" fill="none"/><path d="M874 631.8 H2115" stroke="#e9eaf1" stroke-width="2" stroke-dasharray="8 8" fill="none"/><path d="M958.5 580 V1240" stroke="#eeeef4" stroke-width="3.5" fill="none"/><path d="M1221.2 580 V1240" stroke="#eeeef4" stroke-width="3.5" fill="none"/><path d="M1483.9 580 V1240" stroke="#eeeef4" stroke-width="3.5" fill="none"/><path d="M1746.6 580 V1240" stroke="#eeeef4" stroke-width="3.5" fill="none"/><path d="M2009.3 580 V1240" stroke="#eeeef4" stroke-width="3.5" fill="none"/><path d="M874 580 V1240.7 H2119" stroke="#eaebf1" stroke-width="2" fill="none"/><rect x="939" y="1157.7" width="24" height="82.3" fill="#54b399"/><rect x="1483" y="579.8" width="24" height="660.2" fill="#54b399"/><rect x="2002" y="843.9" width="24" height="396.1" fill="#54b399"/></svg>
<span id="t35" class="t" style="top:1229.1px;font-size:21.22px;line-height:21.22px;font-weight:400;color:#69707d;right:2170.50px;">0</span>
<span id="t36" class="t" style="top:1161.6px;font-size:21.22px;line-height:21.22px;font-weight:400;color:#69707d;letter-spacing:0.216px;right:2170.28px;">500,000</span>
<span id="t37" class="t" style="top:1094.0px;font-size:21.22px;line-height:21.22px;font-weight:400;color:#69707d;letter-spacing:0.012px;right:2170.49px;">1,000,000</span>
<span id="t38" class="t" style="top:1026.5px;font-size:21.22px;line-height:21.22px;font-weight:400;color:#69707d;letter-spacing:0.012px;right:2170.49px;">1,500,000</span>
<span id="t39" class="t" style="top:958.9px;font-size:21.22px;line-height:21.22px;font-weight:400;color:#69707d;letter-spacing:0.012px;right:2170.49px;">2,000,000</span>
<span id="t40" class="t" style="top:891.4px;font-size:21.22px;line-height:21.22px;font-weight:400;color:#69707d;letter-spacing:0.012px;right:2170.49px;">2,500,000</span>
<span id="t41" class="t" style="top:823.8px;font-size:21.22px;line-height:21.22px;font-weight:400;color:#69707d;letter-spacing:0.012px;right:2170.49px;">3,000,000</span>
<span id="t42" class="t" style="top:756.3px;font-size:21.22px;line-height:21.22px;font-weight:400;color:#69707d;letter-spacing:0.012px;right:2170.49px;">3,500,000</span>
<span id="t43" class="t" style="top:688.7px;font-size:21.22px;line-height:21.22px;font-weight:400;color:#69707d;letter-spacing:0.012px;right:2170.49px;">4,000,000</span>
<span id="t44" class="t" style="top:621.2px;font-size:21.22px;line-height:21.22px;font-weight:400;color:#69707d;letter-spacing:0.012px;right:2170.49px;">4,500,000</span>
<span id="t45" class="t" style="top:1258.4px;font-size:21.22px;line-height:21.22px;font-weight:400;color:#69707d;letter-spacing:-0.121px;left:958.5px;transform:translateX(-50%);margin-left:-0.06px;">11:59:42.000</span>
<span id="t46" class="t" style="top:1258.4px;font-size:21.22px;line-height:21.22px;font-weight:400;color:#69707d;letter-spacing:-0.121px;left:1221.2px;transform:translateX(-50%);margin-left:-0.06px;">11:59:42.500</span>
<span id="t47" class="t" style="top:1258.4px;font-size:21.22px;line-height:21.22px;font-weight:400;color:#69707d;letter-spacing:-0.121px;left:1483.9px;transform:translateX(-50%);margin-left:-0.06px;">11:59:43.000</span>
<span id="t48" class="t" style="top:1258.4px;font-size:21.22px;line-height:21.22px;font-weight:400;color:#69707d;letter-spacing:-0.121px;left:1746.6px;transform:translateX(-50%);margin-left:-0.06px;">11:59:43.500</span>
<span id="t49" class="t" style="top:1258.4px;font-size:21.22px;line-height:21.22px;font-weight:400;color:#69707d;letter-spacing:-0.121px;left:2009.3px;transform:translateX(-50%);margin-left:-0.06px;">11:59:44.000</span>
<span id="t50" class="t" style="top:1315.0px;font-size:24.84px;line-height:24.84px;font-weight:700;color:#343741;letter-spacing:-0.055px;left:1495.5px;transform:translateX(-50%);margin-left:-0.03px;">timestamp per 47 milliseconds</span>
<div class="b" style="left:705px;top:909px;width:0;height:0;transform:rotate(-90deg);"><span id="t51" class="t" style="top:-12.4px;font-size:24.84px;line-height:24.84px;font-weight:700;color:#343741;letter-spacing:-0.250px;left:0px;transform:translateX(-50%);margin-left:-0.12px;">Sum of amount</span>
</div>
<svg class="b" style="left:651.45px;top:1443.3px;" width="25.5" height="13.8" viewBox="-2 -2 25.5 13.8"><path d="M0 0 L10.75 9.8 L21.5 0" fill="none" stroke="#343741" stroke-width="2.2" stroke-linecap="round" stroke-linejoin="round"/></svg>
<span id="t52" class="t" style="top:1436.0px;font-size:28.98px;line-height:28.98px;font-weight:700;color:#1a1c21;letter-spacing:-0.183px;left:696.8px;">Suggestions</span>
<div class="b" style="left:644px;top:1482px;width:300px;height:200px;background:#f5f7fa;border:2px solid #979eab;border-radius:12px;box-sizing:border-box;box-shadow:0 2px 5px rgba(0,0,0,.06);"></div>
<div class="b" style="left:964px;top:1482px;width:300px;height:200px;background:#fff;border:2px solid #d2d9e6;border-radius:12px;box-sizing:border-box;"></div>
<div class="b" style="left:1284px;top:1482px;width:300px;height:200px;background:#fff;border:2px solid #d2d9e6;border-radius:12px;box-sizing:border-box;"></div>
<svg class="b" style="left:660px;top:1500px;" width="270" height="120" viewBox="660 1500 270 120"><path d="M682 1541 H898" stroke="#ecedf2" stroke-width="1.6" stroke-dasharray="8 7" fill="none"/><path d="M682 1572.4 H898" stroke="#ecedf2" stroke-width="1.6" stroke-dasharray="8 7" fill="none"/><path d="M682 1603.8 H898" stroke="#ecedf2" stroke-width="1.6" stroke-dasharray="8 7" fill="none"/><path d="M697 1528 V1604" stroke="#ececf1" stroke-width="3.5" fill="none"/><path d="M887 1528 V1604" stroke="#ececf1" stroke-width="3.5" fill="none"/><rect x="694" y="1594" width="4.5" height="10" fill="#54b399"/><rect x="791.5" y="1528" width="4.6" height="76" fill="#54b399"/><rect x="885" y="1558" width="4.6" height="46" fill="#54b399"/></svg>
<span id="t53" class="t" style="top:1642.6px;font-size:24.84px;line-height:24.84px;font-weight:700;color:#343741;letter-spacing:-0.079px;left:794px;transform:translateX(-50%);margin-left:-0.04px;">Current visualization</span>
<svg class="b" style="left:990px;top:1500px;" width="240" height="160" viewBox="990 1500 240 160"><path d="M1002 1541.7 H1218" stroke="#ecedf2" stroke-width="1.6" stroke-dasharray="8 7" fill="none"/><path d="M1002 1567.7 H1218" stroke="#ecedf2" stroke-width="1.6" stroke-dasharray="8 7" fill="none"/><path d="M1002 1593 H1218" stroke="#ecedf2" stroke-width="1.6" stroke-dasharray="8 7" fill="none"/><path d="M1002 1618.2 H1218" stroke="#ecedf2" stroke-width="1.6" stroke-dasharray="8 7" fill="none"/><path d="M1002 1643.6 H1218" stroke="#ecedf2" stroke-width="1.6" stroke-dasharray="8 7" fill="none"/><path d="M1017.6 1520 V1644" stroke="#ececf1" stroke-width="3.5" fill="none"/><path d="M1210.5 1520 V1644" stroke="#ececf1" stroke-width="3.5" fill="none"/><path d="M1013.8 1628 L1017.8 1642.8 H1109.6 L1113.7 1519 L1118 1642.8 H1204.6 L1209.4 1569.5" fill="none" stroke="#54b399" stroke-width="4"/></svg>
<span id="t54" class="t" style="top:1553.1px;font-size:58.99px;line-height:58.99px;font-weight:700;color:#343741;letter-spacing:-0.551px;left:1434px;transform:translateX(-50%);margin-left:-0.28px;">8,429,761</span>
<div class="b" style="left:2208px;top:388px;width:60px;height:1346px;background:linear-gradient(to right, rgba(70,78,95,0) 0%, rgba(70,78,95,.015) 35%, rgba(70,78,95,.045) 65%, rgba(70,78,95,.09) 86%, rgba(70,78,95,.14) 95%, rgba(70,78,95,.19) 100%);"></div>
<div class="b" style="left:2268px;top:388px;width:756px;height:1346px;background:#fff;"></div>
<span id="t55" class="t" style="top:427.4px;font-size:33.12px;line-height:33.12px;font-weight:700;color:#1a1c21;letter-spacing:0.046px;left:2301px;">Vertical axis</span>
<div class="b" style="left:2944px;top:420px;width:48px;height:48px;background:#eef0f4;border-radius:8px;"></div>
<svg class="b" style="left:2956px;top:432px;" width="24" height="24" viewBox="0 0 24 24"><path d="M3 3 L21 21 M21 3 L3 21" stroke="#343741" stroke-width="2.2" stroke-linecap="round"/></svg>
<div class="b" style="left:2268px;top:500px;width:756px;height:2px;background:#d3dae6;"></div>
<div class="b" style="left:2268px;top:566px;width:724px;height:720px;background:#f5f7fa;"></div>
<div class="b" style="left:2268px;top:564px;width:724px;height:2px;background:#d3dae6;"></div>
<div class="b" style="left:2300px;top:562px;width:202px;height:4px;background:#0077cc;"></div>
<span id="t56" class="t" style="top:521.4px;font-size:24.84px;line-height:24.84px;font-weight:700;color:#006bb8;letter-spacing:-0.208px;left:2308.7px;">Quick functions</span>
<span id="t57" class="t" style="top:521.4px;font-size:24.84px;line-height:24.84px;font-weight:700;color:#1a1c21;letter-spacing:-0.626px;left:2534.3px;">Formula</span>
<span id="t58" class="t" style="top:603.2px;font-size:24.84px;line-height:24.84px;font-weight:700;color:#1a1c21;letter-spacing:-0.292px;left:2300.6px;">Select a function</span>
<div class="b" style="left:2662px;top:840px;width:298px;height:48px;background:#edeff3;border-radius:12px;"></div>
<span id="t59" class="t" style="top:657.5px;font-size:28.98px;line-height:28.98px;font-weight:400;color:#006bb8;letter-spacing:0.054px;-webkit-text-stroke:0.55px #006bb8;left:2317px;">Average</span>
<span id="t60" class="t" style="top:705.5px;font-size:28.98px;line-height:28.98px;font-weight:400;color:#69707d;letter-spacing:0.422px;-webkit-text-stroke:0.55px #69707d;left:2317px;">Count</span>
<span id="t61" class="t" style="top:753.5px;font-size:28.98px;line-height:28.98px;font-weight:400;color:#006bb8;letter-spacing:0.543px;-webkit-text-stroke:0.55px #006bb8;left:2317px;">Counter rate</span>
<span id="t62" class="t" style="top:801.5px;font-size:28.98px;line-height:28.98px;font-weight:400;color:#006bb8;letter-spacing:0.378px;-webkit-text-stroke:0.55px #006bb8;left:2317px;">Cumulative sum</span>
<span id="t63" class="t" style="top:849.5px;font-size:28.98px;line-height:28.98px;font-weight:400;color:#006bb8;letter-spacing:0.650px;-webkit-text-stroke:0.55px #006bb8;left:2317px;">Differences</span>
<span id="t64" class="t" style="top:897.5px;font-size:28.98px;line-height:28.98px;font-weight:400;color:#006bb8;letter-spacing:0.215px;-webkit-text-stroke:0.55px #006bb8;left:2317px;">Last value</span>
<span id="t65" class="t" style="top:945.5px;font-size:28.98px;line-height:28.98px;font-weight:400;color:#006bb8;letter-spacing:0.326px;-webkit-text-stroke:0.55px #006bb8;left:2317px;">Maximum</span>
<span id="t66" class="t" style="top:657.5px;font-size:28.98px;line-height:28.98px;font-weight:400;color:#006bb8;letter-spacing:0.397px;-webkit-text-stroke:0.55px #006bb8;left:2679px;">Median</span>
<span id="t67" class="t" style="top:705.5px;font-size:28.98px;line-height:28.98px;font-weight:400;color:#006bb8;letter-spacing:0.417px;-webkit-text-stroke:0.55px #006bb8;left:2679px;">Minimum</span>
<span id="t68" class="t" style="top:753.5px;font-size:28.98px;line-height:28.98px;font-weight:400;color:#006bb8;letter-spacing:0.375px;-webkit-text-stroke:0.55px #006bb8;left:2679px;">Moving average</span>
<span id="t69" class="t" style="top:801.5px;font-size:28.98px;line-height:28.98px;font-weight:400;color:#006bb8;letter-spacing:0.464px;-webkit-text-stroke:0.55px #006bb8;left:2679px;">Percentile</span>
<span id="t70" class="t" style="top:849.5px;font-size:28.98px;line-height:28.98px;font-weight:700;color:#343741;letter-spacing:-1.741px;left:2679px;text-decoration:underline;text-decoration-thickness:2px;text-underline-offset:4px;">Sum</span>
<span id="t71" class="t" style="top:897.5px;font-size:28.98px;line-height:28.98px;font-weight:400;color:#006bb8;letter-spacing:0.535px;-webkit-text-stroke:0.55px #006bb8;left:2679px;">Unique count</span>
<div class="b" style="left:2268px;top:1032px;width:724px;height:2px;background:#d3dae6;"></div>
<span id="t72" class="t" style="top:1068.8px;font-size:24.84px;line-height:24.84px;font-weight:700;color:#1a1c21;letter-spacing:-0.269px;left:2300.6px;">Select a field</span>
<div class="b" style="left:2300px;top:1106px;width:660px;height:63px;background:#fbfcfd;border:2px solid #dfe3ed;border-radius:12px;box-sizing:border-box;"></div>
<span id="t73" class="t" style="top:1125.5px;font-size:28.98px;line-height:28.98px;font-weight:400;color:#343741;letter-spacing:0.355px;left:2316.5px;">amount</span>
<svg class="b" style="left:2917.7px;top:1132.2px;" width="20" height="12" viewBox="-2 -2 20 12"><path d="M0 0 L8.0 8 L16 0" fill="none" stroke="#343741" stroke-width="2.0" stroke-linecap="round" stroke-linejoin="round"/></svg>
<span id="t74" class="t" style="top:1200.0px;font-size:24.84px;line-height:24.84px;font-weight:400;color:#006bb8;letter-spacing:0.578px;-webkit-text-stroke:0.5px #006bb8;left:2647px;">Add advanced options</span>
<svg class="b" style="left:2922.3px;top:1207.5px;" width="20" height="12" viewBox="-2 -2 20 12"><path d="M0 0 L8.0 8 L16 0" fill="none" stroke="#006bb8" stroke-width="2.0" stroke-linecap="round" stroke-linejoin="round"/></svg>
<div class="b" style="left:2268px;top:1285px;width:724px;height:2px;background:#d3dae6;"></div>
<span id="t75" class="t" style="top:1339.4px;font-size:24.84px;line-height:24.84px;font-weight:700;color:#1a1c21;letter-spacing:-0.553px;left:2300.6px;">Display name</span>
<div class="b" style="left:2518px;top:1320px;width:442px;height:63px;background:#fbfcfd;border:2px solid #dfe3ed;border-radius:12px;box-sizing:border-box;"></div>
<span id="t76" class="t" style="top:1336.9px;font-size:28.98px;line-height:28.98px;font-weight:400;color:#343741;letter-spacing:0.246px;left:2534.3px;">Sum of amount</span>
<span id="t77" class="t" style="top:1419.4px;font-size:24.84px;line-height:24.84px;font-weight:700;color:#1a1c21;letter-spacing:-0.230px;left:2300.6px;">Value format</span>
<div class="b" style="left:2518px;top:1400px;width:442px;height:63px;background:#fbfcfd;border:2px solid #dfe3ed;border-radius:12px;box-sizing:border-box;"></div>
<span id="t78" class="t" style="top:1418.5px;font-size:28.98px;line-height:28.98px;font-weight:400;color:#343741;letter-spacing:0.234px;left:2534.3px;">Default</span>
<svg class="b" style="left:2917.7px;top:1425.0px;" width="20" height="12" viewBox="-2 -2 20 12"><path d="M0 0 L8.0 8 L16 0" fill="none" stroke="#343741" stroke-width="2.0" stroke-linecap="round" stroke-linejoin="round"/></svg>
<span id="t79" class="t" style="top:1498.4px;font-size:24.84px;line-height:24.84px;font-weight:700;color:#1a1c21;letter-spacing:-0.532px;left:2300.6px;">Series color</span>
<svg class="b" style="left:2440.5px;top:1498.3px;" width="20" height="20" viewBox="-10 -10 20 20"><circle r="7.8" fill="none" stroke="#69707d" stroke-width="1.4"/><path d="M-2.6 -2.2 C-2.6 -5.6 2.8 -5.6 2.8 -2.4 C2.8 -0.4 0 -0.4 0 1.8" fill="none" stroke="#69707d" stroke-width="1.4" stroke-linecap="round"/><circle cx="0" cy="4.4" r="1" fill="#69707d"/></svg>
<div class="b" style="left:2518px;top:1480px;width:442px;height:63px;background:#fbfcfd;border:2px solid #dfe3ed;border-radius:12px;box-sizing:border-box;"></div>
<div class="b" style="left:2537px;top:1502px;width:19px;height:18px;background:#54b399;border-radius:4px;"></div>
<span id="t80" class="t" style="top:1496.9px;font-size:28.98px;line-height:28.98px;font-weight:400;color:#343741;letter-spacing:1.117px;left:2581.8px;">#54B399</span>
<svg class="b" style="left:2921.0px;top:1505.0px;" width="20" height="12" viewBox="-2 -2 20 12"><path d="M0 0 L8.0 8 L16 0" fill="none" stroke="#343741" stroke-width="2.0" stroke-linecap="round" stroke-linejoin="round"/></svg>
<span id="t81" class="t" style="top:1578.7px;font-size:24.84px;line-height:24.84px;font-weight:700;color:#1a1c21;letter-spacing:-0.654px;left:2300.6px;">Axis side</span>
<div class="b" style="left:2518px;top:1560px;width:442px;height:64px;background:#fbfcfd;border:2px solid #dfe3ed;border-radius:12px;box-sizing:border-box;"></div>
<div class="b" style="left:2524px;top:1565px;width:138px;height:54px;background:#6f7480;border-radius:8px;"></div>
<span id="t82" class="t" style="top:1576.1px;font-size:28.98px;line-height:28.98px;font-weight:700;color:#fff;letter-spacing:-0.656px;left:2593px;transform:translateX(-50%);margin-left:-0.33px;">Auto</span>
<span id="t83" class="t" style="top:1576.1px;font-size:28.98px;line-height:28.98px;font-weight:400;color:#343741;letter-spacing:0.824px;left:2739px;transform:translateX(-50%);margin-left:0.41px;">Left</span>
<span id="t84" class="t" style="top:1576.1px;font-size:28.98px;line-height:28.98px;font-weight:400;color:#343741;letter-spacing:-0.360px;left:2885px;transform:translateX(-50%);margin-left:-0.18px;">Right</span>
<div class="b" style="left:2268px;top:1606px;width:756px;height:128px;background:#f5f7fa;"></div>
<svg class="b" style="left:2303px;top:1657px;" width="26" height="26" viewBox="0 0 26 26"><path d="M4.3 4.3 L21.7 21.7 M21.7 4.3 L4.3 21.7" stroke="#006bb8" stroke-width="2.1" stroke-linecap="round"/></svg>
<span id="t85" class="t" style="top:1655.2px;font-size:28.98px;line-height:28.98px;font-weight:400;color:#006bb8;letter-spacing:0.055px;-webkit-text-stroke:0.55px #006bb8;left:2348.7px;">Close</span>
<div class="b" style="left:3004px;top:514px;width:8px;height:1033px;background:#a7afb2;border-radius:4px;"></div>
</body></html>
